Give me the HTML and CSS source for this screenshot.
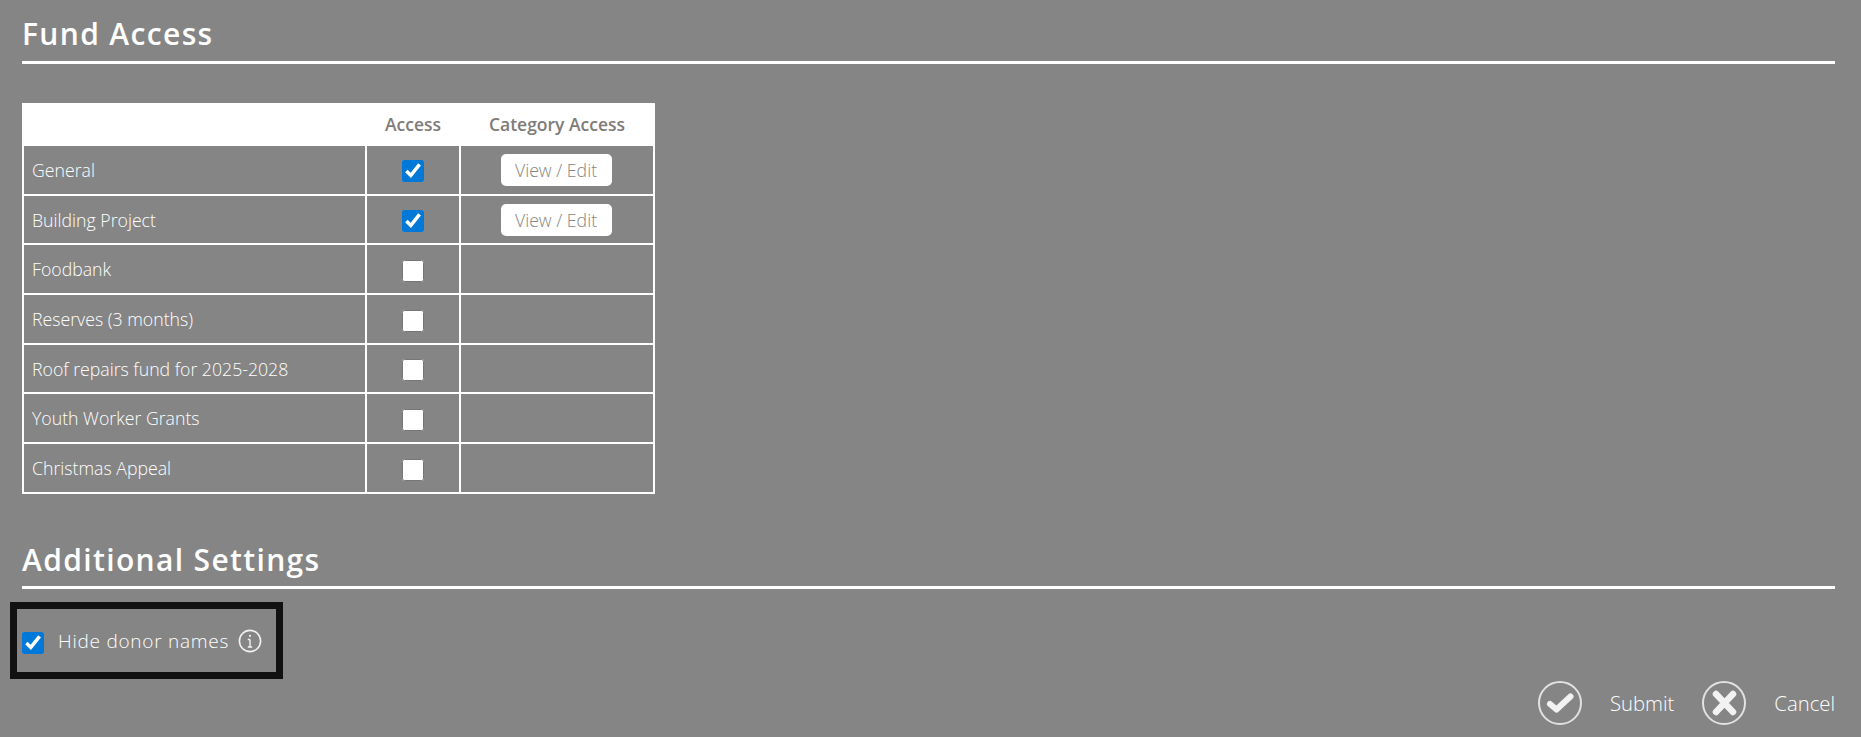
FILE: index.html
```html
<!DOCTYPE html>
<html lang="en">
<head>
<meta charset="utf-8">
<title>Fund Access</title>
<link rel="stylesheet" href="styles.css">
</head>
<body>
<main class="page">
  <h2 class="section-title">Fund Access</h2>
  <table class="fund-table">
    <thead>
      <tr><th class="col-name"></th><th class="col-access">Access</th><th class="col-cat">Category Access</th></tr>
    </thead>
    <tbody>
      <tr><td>General</td><td class="center"><input type="checkbox" class="check" checked></td><td class="center"><button class="view-btn">View / Edit</button></td></tr>
      <tr><td>Building Project</td><td class="center"><input type="checkbox" class="check" checked></td><td class="center"><button class="view-btn">View / Edit</button></td></tr>
      <tr><td>Foodbank</td><td class="center"><input type="checkbox" class="check"></td><td></td></tr>
      <tr><td>Reserves (3 months)</td><td class="center"><input type="checkbox" class="check"></td><td></td></tr>
      <tr><td>Roof repairs fund for 2025-2028</td><td class="center"><input type="checkbox" class="check"></td><td></td></tr>
      <tr><td>Youth Worker Grants</td><td class="center"><input type="checkbox" class="check"></td><td></td></tr>
      <tr><td>Christmas Appeal</td><td class="center"><input type="checkbox" class="check"></td><td></td></tr>
    </tbody>
  </table>
  <h2 class="section-title second">Additional Settings</h2>
  <div class="highlight">
    <input type="checkbox" class="check check-setting" checked>
    <span class="setting-label">Hide donor names</span>
    <svg class="info-icon" viewBox="0 0 24 24" width="24" height="24" fill="none" stroke="#f2f2f2" stroke-width="1.6"><circle cx="12" cy="12" r="10.6"/><path d="M12 10.5v7.5M9.8 18h4.4M9.8 10.5H12" stroke-width="1.4"/><circle cx="12" cy="6.8" r="1.1" fill="#f2f2f2" stroke="none"/></svg>
  </div>
  <div class="actions">
    <button class="action">
      <svg class="action-icon" viewBox="0 0 44 44" width="44" height="44" fill="none" stroke="#f2f2f2"><circle cx="22" cy="22" r="21" stroke-width="2" opacity=".85"/><path d="M12 23l6.5 5.5L32.5 15.5" stroke-width="6" stroke-linecap="round" stroke-linejoin="round"/></svg>
      <span>Submit</span>
    </button>
    <button class="action">
      <svg class="action-icon" viewBox="0 0 44 44" width="44" height="44" fill="none" stroke="#f2f2f2"><circle cx="22" cy="22" r="21" stroke-width="2" opacity=".85"/><path d="M14 13l17 18M31 13L14 31" stroke-width="6.5" stroke-linecap="round"/></svg>
      <span>Cancel</span>
    </button>
  </div>
</main>
</body>
</html>
```
FILE: styles.css
```css
* { box-sizing: border-box; }
html, body { margin: 0; height: 100%; }
body {
  background: #858585;
  color: #fff;
  font-family: "Open Sans", sans-serif;
  font-size: 16px;
  overflow: hidden;
}
.page {
  padding: 15px 26px 0 22px;
}
.section-title {
  margin: 0;
  font-size: 30px;
  line-height: 38px;
  font-weight: 600;
  letter-spacing: 1.35px;
  padding-bottom: 8px;
  border-bottom: 3px solid #fff;
}
.fund-table {
  margin-top: 39px;
  width: 633px;
  border-collapse: collapse;
  table-layout: fixed;
  height: 389px;
}
.fund-table th {
  background: #fff;
  color: #7f7b78;
  font-size: 17.5px;
  font-weight: 600;
  height: 41px;
  padding: 0 0 2px;
  border: 2px solid #fff;
}
.col-name { width: 343px; }
.col-access { width: 94px; }
.fund-table td {
  border: 2px solid #fff;
  padding: 0 8px;
  height: 49.7px;
  font-size: 17.7px;
  font-weight: 300;
}
.fund-table td.center { text-align: center; }
.check {
  width: 22px;
  height: 22px;
  margin: 0;
  accent-color: #0078d7;
  vertical-align: middle;
}
.check-setting { margin-top: 4px; }
.view-btn {
  width: 111px;
  height: 32px;
  margin-right: 2px;
  padding: 0;
  border: 0;
  border-radius: 5px;
  background: #fff;
  color: #858585;
  font: 300 17.7px "Open Sans", sans-serif;
  vertical-align: middle;
}
.second { margin-top: 47px; padding-bottom: 7px; }
.highlight {
  display: flex;
  align-items: center;
  width: 273px;
  height: 77px;
  margin: 13px 0 0 -12px;
  padding: 1px 0 0 5px;
  border: 7px solid #111;
}
.setting-label {
  margin-left: 14px;
  font-size: 19px;
  letter-spacing: .75px;
  font-weight: 300;
}
.info-icon { margin-left: 9px; }
.actions {
  display: flex;
  justify-content: flex-end;
  gap: 28px;
  margin-top: 2px;
}
.action {
  display: flex;
  align-items: center;
  gap: 28px;
  padding: 0;
  border: 0;
  background: none;
  color: #fff;
  font: 300 20.3px "Open Sans", sans-serif;
}
```
